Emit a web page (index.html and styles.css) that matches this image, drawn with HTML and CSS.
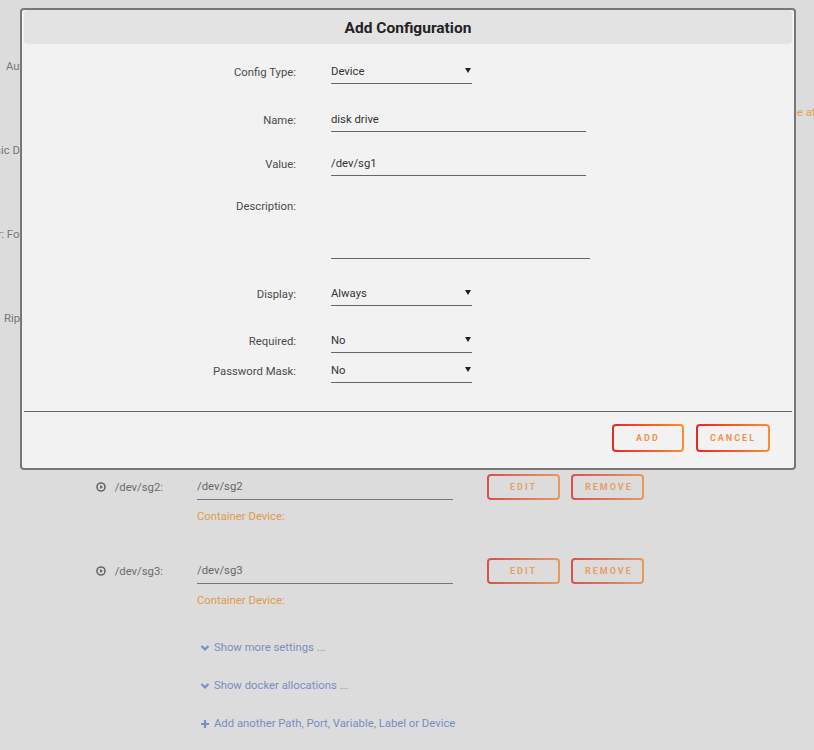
FILE: index.html
```html
<!DOCTYPE html>
<html lang="en">
<head>
    <meta charset="UTF-8">
    <meta name="viewport" content="width=device-width, initial-scale=1.0">
    <title>Add Configuration</title>
    <link rel="stylesheet" href="styles.css">
</head>
<body>
    <main class="page">
        <div class="prev-label first">Autostart:</div>
        <div class="prev-note">same at boot</div>
        <div class="prev-label shift-2">Music Directory:</div>
        <div class="prev-label shift-3">Ripper: Format:</div>
        <div class="prev-label shift-4">Ripper Log:</div>

        <div class="dev-row first">
            <div class="dev-label">
                <svg class="play-icon" viewBox="0 0 10 10" width="10" height="10">
                    <circle cx="5" cy="5" r="4" fill="none" stroke="#666" stroke-width="1.6"/>
                    <path d="M4 3 L7 5 L4 7 Z" fill="#666"/>
                </svg>
                <span>/dev/sg2:</span>
            </div>
            <input class="dev-input" type="text" value="/dev/sg2" readonly>
            <div class="dev-actions">
                <button class="grad-btn dim">Edit</button>
                <button class="grad-btn dim">Remove</button>
            </div>
        </div>
        <div class="dev-note">Container Device:</div>

        <div class="dev-row second">
            <div class="dev-label">
                <svg class="play-icon" viewBox="0 0 10 10" width="10" height="10">
                    <circle cx="5" cy="5" r="4" fill="none" stroke="#666" stroke-width="1.6"/>
                    <path d="M4 3 L7 5 L4 7 Z" fill="#666"/>
                </svg>
                <span>/dev/sg3:</span>
            </div>
            <input class="dev-input" type="text" value="/dev/sg3" readonly>
            <div class="dev-actions">
                <button class="grad-btn dim">Edit</button>
                <button class="grad-btn dim">Remove</button>
            </div>
        </div>
        <div class="dev-note">Container Device:</div>

        <ul class="links">
            <li>
                <svg viewBox="0 0 10 10" width="10" height="10">
                    <path d="M1.5 3 L5 6.5 L8.5 3" fill="none" stroke="#7a8cc4" stroke-width="2.2"/>
                </svg>
                <span>Show more settings ...</span>
            </li>
            <li>
                <svg viewBox="0 0 10 10" width="10" height="10">
                    <path d="M1.5 3 L5 6.5 L8.5 3" fill="none" stroke="#7a8cc4" stroke-width="2.2"/>
                </svg>
                <span>Show docker allocations ...</span>
            </li>
            <li>
                <svg viewBox="0 0 10 10" width="10" height="10">
                    <path d="M5 1 V9 M1 5 H9" fill="none" stroke="#7a8cc4" stroke-width="2.2"/>
                </svg>
                <span>Add another Path, Port, Variable, Label or Device</span>
            </li>
        </ul>
    </main>

    <div class="modal">
        <div class="modal-title">Add Configuration</div>

        <div class="modal-body">
            <div class="field row-type">
                <label>Config Type:</label>
                <span class="select-wrap"><select><option>Device</option></select></span>
            </div>
            <div class="field row-name">
                <label>Name:</label>
                <input class="text-input" type="text" value="disk drive">
            </div>
            <div class="field row-value">
                <label>Value:</label>
                <input class="text-input" type="text" value="/dev/sg1">
            </div>
            <div class="field field-top row-desc">
                <label>Description:</label>
                <textarea class="text-area"></textarea>
            </div>
            <div class="field row-display">
                <label>Display:</label>
                <span class="select-wrap"><select><option>Always</option></select></span>
            </div>
            <div class="field row-required">
                <label>Required:</label>
                <span class="select-wrap"><select><option>No</option></select></span>
            </div>
            <div class="field row-mask">
                <label>Password Mask:</label>
                <span class="select-wrap"><select><option>No</option></select></span>
            </div>
        </div>

        <div class="modal-footer">
            <button class="grad-btn">Add</button>
            <button class="grad-btn">Cancel</button>
        </div>
    </div>
</body>
</html>
```

FILE: styles.css
```css
body {
    margin: 0;
    background: #dcdcdc;
    font-family: Roboto, "Noto Sans", sans-serif;
    font-size: 11.3px;
    color: #666;
    overflow: hidden;
}
.page {
    position: relative;
    height: 750px;
    padding-top: 59px;
    box-sizing: border-box;
}

/* rows of the page that sit behind the dialog */
.prev-label {
    line-height: 16px;
    white-space: nowrap;
    color: #777;
}
.prev-label.first {
    padding-left: 6px;
}
.prev-label.shift-2 {
    margin-top: 22px;
    margin-left: -21px;
}
.prev-label.shift-3 {
    margin-top: 68px;
    margin-left: -31px;
}
.prev-label.shift-4 {
    margin-top: 68px;
    padding-left: 4px;
}
.prev-note {
    margin-top: 30px;
    padding-left: 775px;
    line-height: 16px;
    white-space: nowrap;
    color: #e2a24e;
}

.dev-row {
    display: flex;
    align-items: center;
    height: 26px;
}
.dev-row.first {
    margin-top: 147px;
}
.dev-row.second {
    margin-top: 33px;
}
.dev-label {
    width: 163px;
    display: flex;
    justify-content: flex-end;
    align-items: center;
    gap: 9px;
    color: #6b6b6b;
}
.dev-input {
    margin-left: 34px;
    width: 256px;
    height: 26px;
    box-sizing: border-box;
    border: none;
    border-bottom: 1px solid #777;
    background: transparent;
    font: inherit;
    color: #666;
    padding: 0;
}
.dev-actions {
    margin-left: 34px;
    display: flex;
    gap: 11px;
}
.dev-actions .grad-btn {
    width: 73px;
    height: 26px;
}
.dev-note {
    padding-left: 197px;
    margin-top: 9px;
    line-height: 16px;
    color: #e09a4a;
}

.links {
    list-style: none;
    margin: 31px 0 0;
    padding: 0 0 0 200px;
    color: #7a8cc4;
}
.links li {
    display: flex;
    align-items: center;
    gap: 4px;
    line-height: 16px;
    margin-bottom: 22px;
}

/* gradient outlined buttons */
.grad-btn {
    min-width: 72px;
    height: 28px;
    padding: 0 12px;
    border: 2px solid transparent;
    border-radius: 4px;
    background: linear-gradient(#f2f2f2, #f2f2f2) padding-box,
                linear-gradient(90deg, #e22828, #ff8c2f) border-box;
    color: #f7914a;
    font-family: Roboto, sans-serif;
    font-size: 9px;
    font-weight: bold;
    letter-spacing: 2px;
    text-transform: uppercase;
}
.grad-btn.dim {
    background: linear-gradient(#dcdcdc, #dcdcdc) padding-box,
                linear-gradient(90deg, #d95050, #e89a5a) border-box;
    color: #e89e66;
}

/* dialog */
.modal {
    position: absolute;
    top: 8px;
    left: 20px;
    width: 776px;
    box-sizing: border-box;
    border: 2px solid #777;
    border-radius: 4px;
    background: #f2f2f2;
}
.modal-title {
    margin: 0 2px;
    height: 34px;
    line-height: 36px;
    background: #e3e3e3;
    border-radius: 4px;
    text-align: center;
    font-size: 15.5px;
    font-weight: bold;
    color: #222;
}
.modal-body {
    padding-top: 16px;
    padding-bottom: 28px;
    border-bottom: 1px solid #666;
    margin: 0 2px;
}
.field {
    display: grid;
    grid-template-columns: 272px 1fr;
    column-gap: 35px;
    align-items: center;
}
.field label {
    text-align: right;
    color: #4a4a4a;
}
.field-top {
    align-items: start;
}
.field-top label {
    padding-top: 3px;
    line-height: 16px;
}
.row-name { margin-top: 24px; }
.row-value { margin-top: 20px; }
.row-desc { margin-top: 20px; }
.row-display { margin-top: 23px; }
.row-required { margin-top: 23px; }
.row-mask { margin-top: 6px; }

.text-input,
.select-wrap select {
    height: 24px;
    box-sizing: border-box;
    border: none;
    border-bottom: 1px solid #666;
    background: transparent;
    font: inherit;
    color: #333;
    padding: 0;
    outline: none;
}
.text-input {
    width: 255px;
}
.text-area {
    width: 259px;
    height: 63px;
    box-sizing: border-box;
    border: none;
    border-bottom: 1px solid #666;
    background: transparent;
    resize: none;
    font: inherit;
    padding: 0;
}
.select-wrap {
    position: relative;
    width: 141px;
}
.select-wrap select {
    width: 141px;
    -webkit-appearance: none;
    appearance: none;
}
.select-wrap::after {
    content: "";
    position: absolute;
    right: 1px;
    top: 8px;
    border-left: 3px solid transparent;
    border-right: 3px solid transparent;
    border-top: 5px solid #222;
    pointer-events: none;
}
.modal-footer {
    display: flex;
    justify-content: flex-end;
    gap: 12px;
    padding: 12px 24px 16px 0;
}
```
